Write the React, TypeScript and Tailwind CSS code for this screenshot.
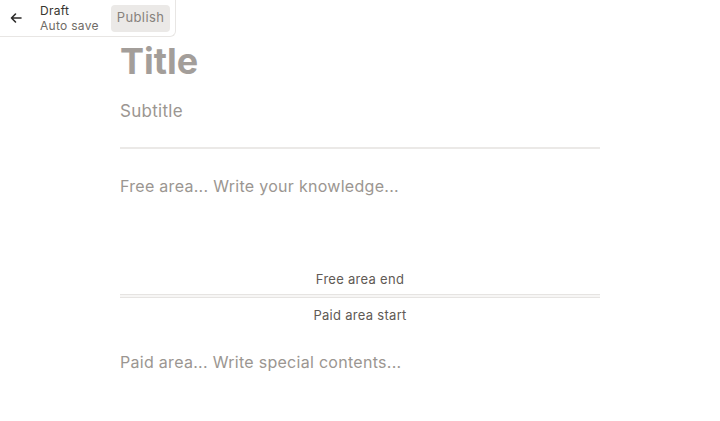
import React from "react";

export default function App() {
  return (
    <div className="relative w-[720px] h-[421px] bg-white overflow-hidden tracking-[0.018em]" style={{ fontFamily: "Inter, 'Noto Sans', sans-serif" }}>
      <div className="absolute left-0 top-0 flex items-center h-[37px] pl-[9px] pr-[5px] bg-white border-r border-b border-[#e8e6e4] rounded-br-[6px]">
        <button className="w-[14px] h-[14px] flex items-center justify-center text-[#2b2a29]">
          <svg width="14" height="14" viewBox="0 0 14 14" fill="none" stroke="currentColor" strokeWidth="1.6" strokeLinecap="round" strokeLinejoin="round">
            <path d="M12 7H2.5M6.5 3L2.5 7l4 4" />
          </svg>
        </button>
        <div className="ml-[17px] flex flex-col leading-[15px]">
          <span className="text-[12px] text-[#37352f]">Draft</span>
          <span className="text-[12px] text-[#6f6b66]">Auto save</span>
        </div>
        <button className="ml-[12px] h-[27px] px-[6px] rounded-[4px] bg-[#ebe9e7] text-[13px] tracking-[0.03em] text-[#86817c]">Publish</button>
      </div>
      <div className="mx-auto w-[480px] pt-[38px] flex flex-col">
        <div className="text-[36px] font-bold leading-[46px] tracking-normal text-[#a39e9a]">Title</div>
        <div className="mt-[16px] text-[17px] leading-[22px] text-[#9b9691]">Subtitle</div>
        <div className="mt-[25px] h-[2px] bg-[#ebe9e7]" />
        <div className="mt-[26px] text-[16px] leading-[22px] text-[#9b9691]">Free area... Write your knowledge...</div>
        <div className="mt-[73px] text-center text-[13px] leading-[18px] text-[#5f5a55]">Free area end</div>
        <div className="mt-[6px] h-[4px] border-y border-[#e6e4e2] bg-[#f7f6f5]" />
        <div className="mt-[8px] text-center text-[13px] leading-[18px] text-[#5f5a55]">Paid area start</div>
        <div className="mt-[27px] text-[16px] leading-[22px] text-[#9b9691]">Paid area... Write special contents...</div>
      </div>
    </div>
  );
}
